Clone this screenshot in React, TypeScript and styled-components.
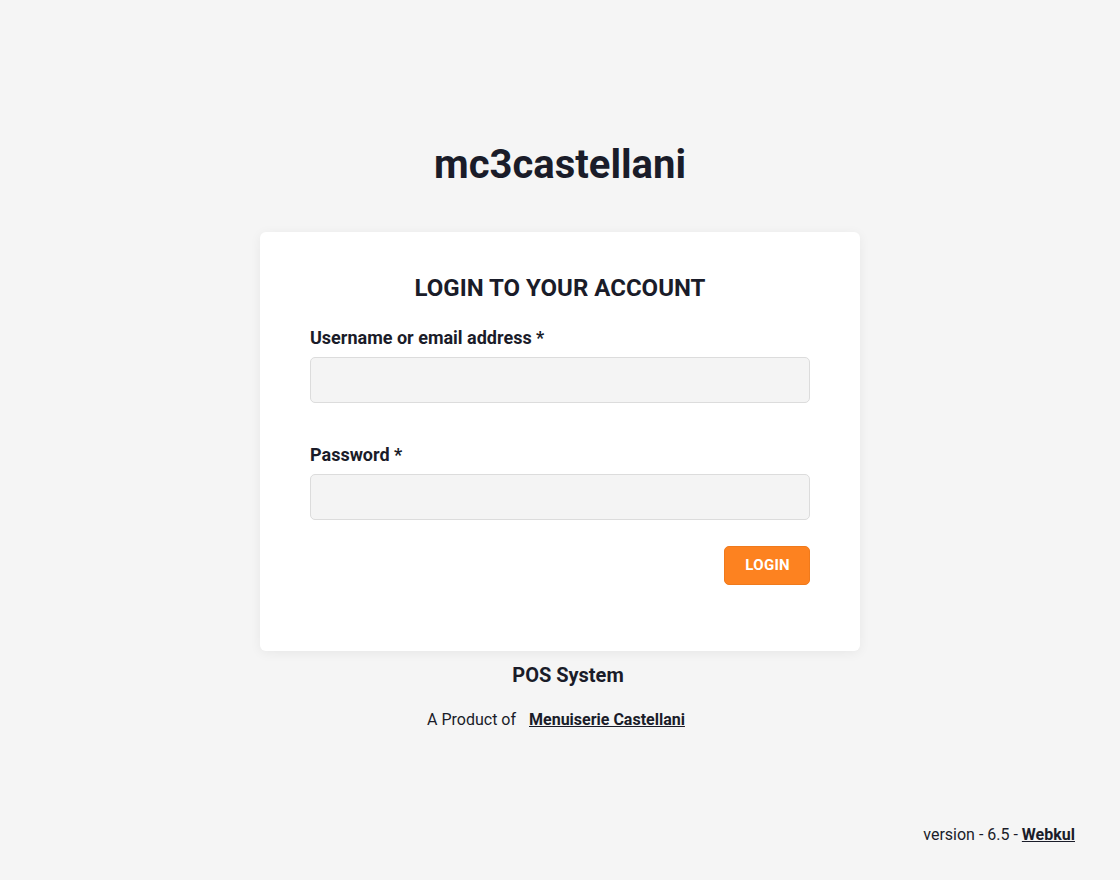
import React from "react";
import styled, { createGlobalStyle } from "styled-components";

const Global = createGlobalStyle`
  * { box-sizing: border-box; }
  html, body { margin: 0; padding: 0; }
  body {
    background: #f5f5f5;
    font-family: Roboto, "Liberation Sans", Arial, sans-serif;
    color: #1a1c29;
  }
`;

const Page = styled.div`
  min-height: 100vh;
  display: flex;
  flex-direction: column;
  align-items: center;
`;

const Brand = styled.h1`
  margin: 141px 0 43px;
  font-size: 40px;
  line-height: 48px;
  font-weight: 700;
  text-align: center;
`;

const Card = styled.form`
  width: 600px;
  background: #fff;
  border-radius: 6px;
  box-shadow: 0 2px 12px rgba(0, 0, 0, 0.06);
  padding: 42px 50px 66px;
  display: flex;
  flex-direction: column;
`;

const Heading = styled.h2`
  margin: 0 0 23px;
  font-size: 24px;
  line-height: 28px;
  font-weight: 700;
  text-align: center;
  text-transform: uppercase;
`;

const Field = styled.div<{ $gap?: number }>`
  display: flex;
  flex-direction: column;
  gap: 7px;
  margin-bottom: ${(p) => p.$gap ?? 0}px;
`;

const Label = styled.label`
  padding-top: 1px;
  font-size: 18px;
  line-height: 24px;
  font-weight: 700;
`;

const Input = styled.input`
  height: 46px;
  width: 100%;
  background: #f4f4f4;
  border: 1px solid #dcdcdc;
  border-radius: 5px;
  padding: 0 14px;
  font-family: inherit;
  font-size: 16px;
  outline: none;
`;

const Actions = styled.div`
  display: flex;
  justify-content: flex-end;
`;

const Button = styled.button`
  height: 39px;
  padding: 0 19px 1px 20px;
  background: #fd8220;
  color: #fff;
  border: 1px solid #f07a1c;
  border-radius: 5px;
  font-family: inherit;
  font-size: 15px;
  font-weight: 700;
  letter-spacing: 0.3px;
  cursor: pointer;
`;

const Product = styled.div`
  margin-top: 12px;
  padding-left: 16px;
  font-size: 20px;
  line-height: 24px;
  font-weight: 700;
  text-align: center;
`;

const Credit = styled.div`
  margin-top: 21px;
  padding-right: 8px;
  font-size: 16px;
  line-height: 24px;
  text-align: center;
`;

const Link = styled.a<{ $gap?: number }>`
  color: #1a1c29;
  font-weight: 700;
  text-decoration: underline;
  margin-left: ${(p) => p.$gap ?? 0}px;
`;

const Footer = styled.div`
  margin-top: auto;
  align-self: stretch;
  display: flex;
  justify-content: flex-end;
  padding: 0 45px 33px;
  font-size: 16px;
  line-height: 24px;
`;

export default function App() {
  return (
    <>
      <Global />
      <Page>
        <Brand>mc3castellani</Brand>
        <Card onSubmit={(e) => e.preventDefault()}>
          <Heading>Login to your account</Heading>
          <Field $gap={39}>
            <Label htmlFor="user">Username or email address *</Label>
            <Input id="user" type="text" />
          </Field>
          <Field $gap={26}>
            <Label htmlFor="pass">Password *</Label>
            <Input id="pass" type="password" />
          </Field>
          <Actions>
            <Button type="submit">LOGIN</Button>
          </Actions>
        </Card>
        <Product>POS System</Product>
        <Credit>
          A Product of <Link href="#" $gap={9}>Menuiserie Castellani</Link>
        </Credit>
        <Footer>
          <span>
            version - 6.5 - <Link href="#">Webkul</Link>
          </span>
        </Footer>
      </Page>
    </>
  );
}
